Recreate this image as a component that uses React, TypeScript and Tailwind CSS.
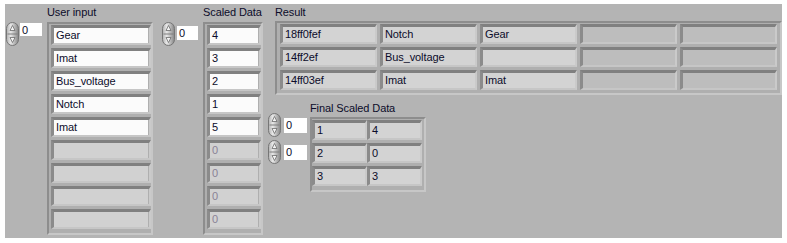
import React from "react";

const Spinner = ({ className = "" }: { className?: string }) => (
  <svg width="13" height="24" viewBox="0 0 13 24" className={className}>
    <defs>
      <linearGradient id="spg" x1="0" x2="1" y1="0" y2="0">
        <stop offset="0" stopColor="#b0b0b0" />
        <stop offset="0.35" stopColor="#e8e8e8" />
        <stop offset="1" stopColor="#858585" />
      </linearGradient>
    </defs>
    <rect x="0.5" y="0.5" width="12" height="23" rx="6" fill="url(#spg)" stroke="#767676" />
    <line x1="1.5" y1="12" x2="11.5" y2="12" stroke="#7e7e7e" />
    <path d="M6.5 3.5 L9 8.5 H4 Z" fill="#f2f2f2" stroke="#6c6c6c" strokeWidth="0.8" />
    <path d="M6.5 20.5 L9 15.5 H4 Z" fill="#f2f2f2" stroke="#6c6c6c" strokeWidth="0.8" />
  </svg>
);

const NumBox = ({ className }: { className: string }) => (
  <div className={`bg-white pl-[2px] text-[11px] leading-[14px] text-[#0c0c2a] ${className}`}>0</div>
);

const Cell = ({
  text,
  boxClass,
}: {
  text: string;
  boxClass: string;
}) => (
  <div className="border-t-[3px] border-l-[3px] border-b-[2px] border-r-[2px] border-t-[#808080] border-l-[#8b8b8b] border-b-[#c6c6c6] border-r-[#cacaca]">
    <div className={`h-[15px] pl-[2px] text-[11px] leading-[15px] whitespace-nowrap overflow-hidden ${boxClass}`}>
      {text}
    </div>
  </div>
);

const frameCls =
  "border-2 border-t-[#8d8d8d] border-l-[#8d8d8d] border-b-[#c7c7c7] border-r-[#c7c7c7] bg-[#afafaf]";

const Label = ({ children, className = "" }: { children: React.ReactNode; className?: string }) => (
  <div className={`h-[13px] text-[11px] leading-[13px] text-[#0c0c2a] whitespace-nowrap ${className}`}>{children}</div>
);

export default function App() {
  const userInput = ["Gear", "Imat", "Bus_voltage", "Notch", "Imat"];
  const scaled = ["4", "3", "2", "1", "5"];
  const result = [
    ["18ff0fef", "Notch", "Gear", "", ""],
    ["14ff2ef", "Bus_voltage", "", "", ""],
    ["14ff03ef", "Imat", "Imat", "", ""],
  ];
  const finalData = [
    ["1", "4"],
    ["2", "0"],
    ["3", "3"],
  ];

  return (
    <div className="w-[787px] h-[243px] bg-white pt-[4px] pl-[5px] font-['Liberation_Sans',Arial,sans-serif] tracking-[-0.1px]">
      <div className="w-[777px] h-[234px] bg-[#b4b4b4] flex items-start pl-[1px]">
        {/* index 1 */}
        <div className="flex items-start">
          <Spinner className="mt-[18px]" />
          <NumBox className="ml-[1px] mt-[19px] w-[22px] h-[13px]" />
        </div>

        {/* User input */}
        <div className="ml-[5px] flex flex-col">
          <Label className="mt-[2px]">User input</Label>
          <div className={`mt-[3px] w-[106px] pt-[1px] pl-[2px] pb-[4px] flex flex-col gap-[3px] ${frameCls}`}>
            {Array.from({ length: 9 }).map((_, i) =>
              i < userInput.length ? (
                <Cell key={i} text={userInput[i]} boxClass="w-[94px] bg-[#fbfbfb] text-[#0c0c2a]" />
              ) : (
                <Cell key={i} text="" boxClass="w-[94px] bg-[#d1d1d1]" />
              )
            )}
          </div>
        </div>

        {/* index 2 */}
        <div className="ml-[9px] flex items-start">
          <Spinner className="mt-[18px]" />
          <NumBox className="ml-[2px] mt-[22px] w-[21px] h-[14px]" />
        </div>

        {/* Scaled Data */}
        <div className="ml-[5px] flex flex-col">
          <Label className="mt-[2px]">Scaled Data</Label>
          <div className={`mt-[3px] w-[60px] pt-[1px] pl-[2px] pb-[4px] flex flex-col gap-[3px] ${frameCls}`}>
            {Array.from({ length: 9 }).map((_, i) =>
              i < scaled.length ? (
                <Cell key={i} text={scaled[i]} boxClass="w-[48px] bg-[#fbfbfb] text-[#0c0c2a]" />
              ) : (
                <Cell key={i} text="0" boxClass="w-[48px] bg-[#d1d1d1] text-[#8a8196]" />
              )
            )}
          </div>
        </div>

        {/* Result + Final */}
        <div className="ml-[5px] flex flex-col">
          <div className="ml-[7px] flex flex-col">
            <Label className="mt-[2px]">Result</Label>
            <div className={`mt-[2px] w-[507px] pt-[1px] pl-[3px] pr-[2px] pb-[3px] grid grid-cols-[repeat(5,97px)] gap-[3px] ${frameCls}`}>
              {result.flatMap((row, r) =>
                row.map((t, c) => (
                  <Cell
                    key={`${r}-${c}`}
                    text={t}
                    boxClass={
                      c < 3
                        ? "w-[92px] bg-[#d3d3d3] text-[#0c0c2a]"
                        : "w-[92px] bg-[#bdbdbd] text-[#0c0c2a]"
                    }
                  />
                ))
              )}
            </div>
          </div>

          <div className="mt-[7px] flex items-start">
            <div className="mt-[11px] flex flex-col gap-[3px]">
              <div className="flex items-center">
                <Spinner />
                <NumBox className="ml-[3px] w-[23px] h-[15px]" />
              </div>
              <div className="flex items-center">
                <Spinner />
                <NumBox className="ml-[3px] w-[23px] h-[15px]" />
              </div>
            </div>
            <div className="ml-[3px] flex flex-col">
              <Label>Final Scaled Data</Label>
              <div className={`mt-[2px] w-[116px] pt-[1px] pr-[2px] pb-[4px] grid grid-cols-[repeat(2,55px)] gap-y-[3px] ${frameCls}`}>
                {finalData.flatMap((row, r) =>
                  row.map((t, c) => (
                    <Cell key={`${r}-${c}`} text={t} boxClass="w-[50px] bg-[#d3d3d3] text-[#0c0c2a]" />
                  ))
                )}
              </div>
            </div>
          </div>
        </div>
      </div>
    </div>
  );
}
